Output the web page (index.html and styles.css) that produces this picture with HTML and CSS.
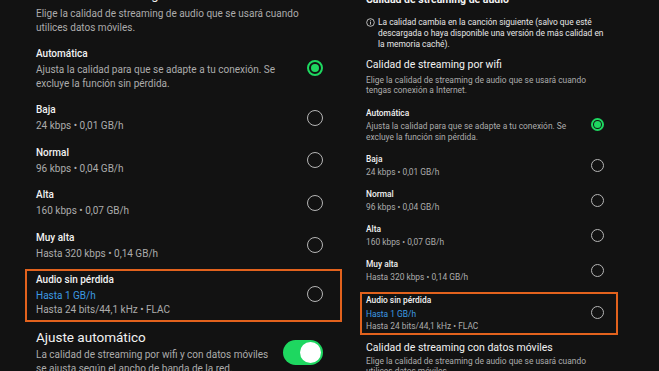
FILE: index.html
```html
<!DOCTYPE html>
<html lang="es">
<head>
<meta charset="utf-8">
<title>Calidad de audio</title>
<link rel="stylesheet" href="styles.css">
</head>
<body>
<div class="screen">
  <section class="panel panel-l">
    <h2 class="sec-title">Calidad de streaming con datos móviles</h2>
    <p class="sec-desc">Elige la calidad de streaming de audio que se usará cuando<br>utilices datos móviles.</p>
    <ul class="options">
      <li class="option">
        <div class="opt-text"><div class="opt-title">Automática</div><div class="opt-sub">Ajusta la calidad para que se adapte a tu conexión. Se<br>excluye la función sin pérdida.</div></div>
        <span class="radio on"></span>
      </li>
      <li class="option">
        <div class="opt-text"><div class="opt-title">Baja</div><div class="opt-sub">24 kbps • 0,01 GB/h</div></div>
        <span class="radio"></span>
      </li>
      <li class="option">
        <div class="opt-text"><div class="opt-title">Normal</div><div class="opt-sub">96 kbps • 0,04 GB/h</div></div>
        <span class="radio"></span>
      </li>
      <li class="option">
        <div class="opt-text"><div class="opt-title">Alta</div><div class="opt-sub">160 kbps • 0,07 GB/h</div></div>
        <span class="radio"></span>
      </li>
      <li class="option">
        <div class="opt-text"><div class="opt-title">Muy alta</div><div class="opt-sub">Hasta 320 kbps • 0,14 GB/h</div></div>
        <span class="radio"></span>
      </li>
      <li class="option highlight">
        <div class="opt-text"><div class="opt-title">Audio sin pérdida</div><div class="opt-blue">Hasta 1 GB/h</div><div class="opt-sub2">Hasta 24 bits/44,1 kHz • FLAC</div></div>
        <span class="radio"></span>
      </li>
    </ul>
    <div class="toggle-row">
      <div class="toggle-text">
        <div class="toggle-title">Ajuste automático</div>
        <div class="sec-desc">La calidad de streaming por wifi y con datos móviles<br>se ajusta según el ancho de banda de la red.</div>
      </div>
      <span class="toggle"><span class="knob"></span></span>
    </div>
  </section>

  <section class="panel panel-r">
    <h2 class="top-title">Calidad de streaming de audio</h2>
    <div class="info">
      <svg class="info-icon" viewBox="0 0 16 16" aria-hidden="true"><circle cx="8" cy="8" r="6.8" fill="none" stroke="#e6e6e6" stroke-width="1.4"/><rect x="7.3" y="6.8" width="1.4" height="5" fill="#e6e6e6"/><circle cx="8" cy="4.8" r="0.9" fill="#e6e6e6"/></svg>
      <p class="info-text">La calidad cambia en la canción siguiente (salvo que esté<br>descargada o haya disponible una versión de más calidad en<br>la memoria caché).</p>
    </div>
    <h2 class="sec-title">Calidad de streaming por wifi</h2>
    <p class="sec-desc">Elige la calidad de streaming de audio que se usará cuando<br>tengas conexión a Internet.</p>
    <ul class="options">
      <li class="option">
        <div class="opt-text"><div class="opt-title">Automática</div><div class="opt-sub">Ajusta la calidad para que se adapte a tu conexión. Se<br>excluye la función sin pérdida.</div></div>
        <span class="radio on"></span>
      </li>
      <li class="option">
        <div class="opt-text"><div class="opt-title">Baja</div><div class="opt-sub">24 kbps • 0,01 GB/h</div></div>
        <span class="radio"></span>
      </li>
      <li class="option">
        <div class="opt-text"><div class="opt-title">Normal</div><div class="opt-sub">96 kbps • 0,04 GB/h</div></div>
        <span class="radio"></span>
      </li>
      <li class="option">
        <div class="opt-text"><div class="opt-title">Alta</div><div class="opt-sub">160 kbps • 0,07 GB/h</div></div>
        <span class="radio"></span>
      </li>
      <li class="option">
        <div class="opt-text"><div class="opt-title">Muy alta</div><div class="opt-sub">Hasta 320 kbps • 0,14 GB/h</div></div>
        <span class="radio"></span>
      </li>
      <li class="option highlight">
        <div class="opt-text"><div class="opt-title">Audio sin pérdida</div><div class="opt-blue">Hasta 1 GB/h</div><div class="opt-sub2">Hasta 24 bits/44,1 kHz • FLAC</div></div>
        <span class="radio"></span>
      </li>
    </ul>
    <h2 class="sec-title second">Calidad de streaming con datos móviles</h2>
    <p class="sec-desc">Elige la calidad de streaming de audio que se usará cuando<br>utilices datos móviles.</p>
  </section>
</div>
</body>
</html>
```

FILE: styles.css
```css
* { box-sizing: border-box; }
html, body { margin: 0; padding: 0; }
body {
  background: #121212;
  width: 659px;
  height: 371px;
  overflow: hidden;
  font-family: Roboto, "Noto Sans", sans-serif;
  color: #ececec;
}
.screen {
  display: flex;
  width: 659px;
  height: 371px;
  overflow: hidden;
}
.panel { flex: none; }
.options { list-style: none; margin: 0; padding: 0; }
.option {
  display: flex;
  align-items: center;
  justify-content: space-between;
}
.opt-text { white-space: nowrap; }
.opt-title { color: #f2f2f2; font-weight: 500; }
.opt-sub, .opt-sub2 { color: #acacac; }
.opt-blue { color: #3d9be3; }
.sec-title { font-weight: 400; margin: 0; color: #f2f2f2; white-space: nowrap; }
.sec-desc { margin: 0; color: #acacac; white-space: nowrap; }
.radio {
  flex: none;
  border-radius: 50%;
  border: 1.5px solid #b5b5b5;
  display: flex;
  align-items: center;
  justify-content: center;
}
.radio.on { border: 2px solid #1ed760; }
.radio.on::after {
  content: "";
  border-radius: 50%;
  background: #1ed760;
}

/* LEFT panel */
.panel-l {
  width: 345px;
  padding: 0 22px 0 36px;
}
.panel-l .sec-title { font-size: 13px; line-height: 20px; margin-top: -15.5px; margin-bottom: 2.5px; }
.panel-l .sec-desc { font-size: 10px; line-height: 14px; }
.panel-l .options { margin-top: 5px; }
.panel-l .option { padding: 5.75px 0; }
.panel-l .opt-title { font-size: 10px; line-height: 15px; margin-bottom: 2px; }
.panel-l .opt-sub { font-size: 10px; line-height: 14px; }
.panel-l .opt-blue { font-size: 10px; line-height: 14px; }
.panel-l .opt-sub2 { font-size: 10px; line-height: 14px; }
.panel-l .radio { width: 16px; height: 16px; }
.panel-l .radio.on::after { width: 8px; height: 8px; }
.panel-l .highlight {
  margin: 2.5px -19px 0 -11px;
  border: 2px solid #e2621d;
  padding: 0.5px 17px 3px 9px;
}
.toggle-row {
  display: flex;
  align-items: center;
  justify-content: space-between;
  margin-top: 5.5px;
}
.toggle-title { font-size: 13.5px; line-height: 20px; color: #f2f2f2; margin-bottom: 1px; }
.toggle {
  flex: none;
  width: 40px;
  height: 25px;
  border-radius: 13px;
  background: #1ed760;
  display: flex;
  align-items: center;
  justify-content: flex-end;
  padding-right: 2px;
  margin-top: 1px;
}
.knob { width: 21px; height: 21px; border-radius: 50%; background: #fff; }

/* RIGHT panel */
.panel-r {
  width: 314px;
  padding: 0 55px 0 21px;
}
.top-title { font-size: 10.5px; line-height: 15px; font-weight: 700; margin: -8px 0 0; color: #f2f2f2; white-space: nowrap; }
.info { display: flex; align-items: flex-start; gap: 3px; margin-top: 9.5px; }
.info-icon { width: 9px; height: 9px; flex: none; margin-top: 1px; }
.info-text { margin: 0; font-size: 8.4px; line-height: 11px; color: #e6e6e6; white-space: nowrap; }
.panel-r .sec-title { font-size: 10.5px; line-height: 15px; margin-top: 7px; }
.panel-r .sec-title.second { margin-top: 4.5px; }
.panel-r .sec-desc { font-size: 8.4px; line-height: 10.5px; margin-top: 3px; }
.panel-r .sec-title.second + .sec-desc { margin-top: 1px; }
.panel-r .options { margin-top: 6px; }
.panel-r .option { padding: 5px 0; }
.panel-r .opt-title { font-size: 8.4px; line-height: 12px; margin-bottom: 2px; }
.panel-r .opt-sub { font-size: 8.4px; line-height: 11px; }
.panel-r .opt-blue { font-size: 8.4px; line-height: 12px; margin-top: 1px; }
.panel-r .opt-sub2 { font-size: 8.4px; line-height: 12px; }
.panel-r .radio { width: 13px; height: 13px; }
.panel-r .radio.on::after { width: 7px; height: 7px; }
.panel-r .highlight {
  margin: 4px -14px 0 -6px;
  border: 2px solid #e2621d;
  padding: 0 12px 1.5px 4px;
}
```
